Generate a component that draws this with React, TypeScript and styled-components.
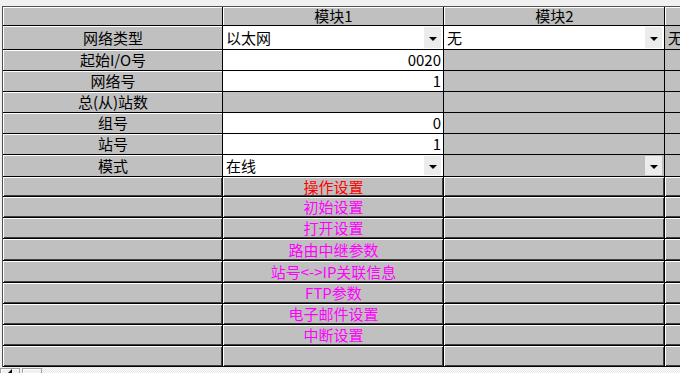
import React from 'react'
import styled, {createGlobalStyle, css} from 'styled-components'

const GlobalStyle = createGlobalStyle`
  html, body {
    margin: 0;
    padding: 0;
  }
  body {
    width: 680px;
    height: 373px;
    overflow: hidden;
    background: #f0f0f0;
    font-family: "Noto Sans CJK SC", "Liberation Sans", sans-serif;
    font-size: 15px;
    color: #000;
  }
`

const COLUMN_WIDTHS = [220, 221, 221, 221]
const ROW_HEIGHTS = [19, 24, 21, 21, 21, 21, 21, 22, 20, 21, 21, 22, 22, 21, 21, 21, 21]

type CellKind = 'header' | 'label' | 'input' | 'disabled' | 'action'

const Page = styled.div`
  display: flex;
  flex-direction: column;
  height: 373px;
  padding-top: 6px;
  box-sizing: border-box;
  overflow: hidden;
`

const Sheet = styled.div`
  display: grid;
  grid-template-columns: ${COLUMN_WIDTHS.map((w) => `${w}px`).join(' ')};
  grid-template-rows: ${ROW_HEIGHTS.map((h) => `${h}px`).join(' ')};
  width: max-content;
  margin-left: 2px;
  border-top: 1px solid #505050;
  border-left: 1px solid #505050;
`

const raised = css`
  background: #c0c0c0;
  box-shadow: inset 1px 1px 0 #ffffff;
`

const Cell = styled.div<{$kind: CellKind; $align?: 'left' | 'center' | 'right'; $color?: string}>`
  box-sizing: border-box;
  display: flex;
  align-items: center;
  justify-content: ${(p) =>
    p.$align === 'right' ? 'flex-end' : p.$align === 'left' ? 'flex-start' : 'center'};
  white-space: nowrap;
  line-height: 17px;
  border-right: 1px solid #000;
  border-bottom: 1px solid #000;
  padding: 0 2px 1px 3px;
  color: ${(p) => p.$color || '#000'};
  ${(p) => (p.$kind === 'header' || p.$kind === 'label') && raised}
  ${(p) => p.$kind === 'input' && 'background: #ffffff;'}
  ${(p) => p.$kind === 'disabled' && 'background: #c0c0c0;'}
  ${(p) =>
    p.$kind === 'action' &&
    css`
      background: #c0c0c0;
      box-shadow: inset 1px 1px 0 #ffffff, inset -1px -1px 0 #404040;
    `}
`

const Value = styled.span`
  flex: 1;
`

const DropButton = styled.span`
  align-self: stretch;
  width: 17px;
  margin: 1px 0 0 2px;
  background: #ececec;
  display: flex;
  align-items: center;
  justify-content: center;
  padding-top: 3px;
  box-sizing: border-box;
  &::after {
    content: '';
    border-left: 4px solid transparent;
    border-right: 4px solid transparent;
    border-top: 4px solid #000;
  }
`

const ScrollBar = styled.div`
  display: flex;
  height: 17px;
  margin-top: 1px;
  background: repeating-conic-gradient(#ffffff 0 25%, #e4e4e4 0 50%) 0 0 / 2px 2px;
`

const ScrollButton = styled.div<{$arrow?: boolean}>`
  width: 20px;
  box-sizing: border-box;
  background: #f0f0f0;
  border: 1px solid #a0a0a0;
  box-shadow: inset 1px 1px 0 #ffffff;
  display: flex;
  align-items: center;
  justify-content: center;
  margin-right: 2px;
  ${(p) =>
    p.$arrow &&
    css`
      &::after {
        content: '';
        border-top: 4px solid transparent;
        border-bottom: 4px solid transparent;
        border-right: 4px solid #000;
        margin-bottom: 4px;
      }
    `}
`

type Row = {label: string; cells: React.ReactNode[]}

const Select = ({value, kind = 'input'}: {value: string; kind?: CellKind}) => (
  <Cell $kind={kind} $align="left">
    <Value>{value}</Value>
    <DropButton />
  </Cell>
)

const Number = ({value}: {value: string}) => (
  <Cell $kind="input" $align="right">
    {value}
  </Cell>
)

const Blank = ({kind = 'disabled'}: {kind?: CellKind}) => <Cell $kind={kind} />

const actions = [
  {text: '操作设置', color: '#ff0000'},
  {text: '初始设置', color: '#ff00ff'},
  {text: '打开设置', color: '#ff00ff'},
  {text: '路由中继参数', color: '#ff00ff'},
  {text: '站号<->IP关联信息', color: '#ff00ff'},
  {text: 'FTP参数', color: '#ff00ff'},
  {text: '电子邮件设置', color: '#ff00ff'},
  {text: '中断设置', color: '#ff00ff'},
  {text: '', color: '#ff00ff'},
]

const rows: Row[] = [
  {
    label: '网络类型',
    cells: [
      <Select key="a" value="以太网" />,
      <Select key="b" value="无" />,
      <Cell key="c" $kind="disabled" $align="left">
        无
      </Cell>,
    ],
  },
  {label: '起始I/O号', cells: [<Number key="a" value="0020" />, <Blank key="b" />, <Blank key="c" />]},
  {label: '网络号', cells: [<Number key="a" value="1" />, <Blank key="b" />, <Blank key="c" />]},
  {label: '总(从)站数', cells: [<Blank key="a" />, <Blank key="b" />, <Blank key="c" />]},
  {label: '组号', cells: [<Number key="a" value="0" />, <Blank key="b" />, <Blank key="c" />]},
  {label: '站号', cells: [<Number key="a" value="1" />, <Blank key="b" />, <Blank key="c" />]},
  {
    label: '模式',
    cells: [
      <Select key="a" value="在线" />,
      <Select key="b" value="" kind="disabled" />,
      <Blank key="c" />,
    ],
  },
]

export default function App() {
  return (
    <Page>
      <GlobalStyle />
      <Sheet>
        <Cell $kind="header" />
        <Cell $kind="header">模块1</Cell>
        <Cell $kind="header">模块2</Cell>
        <Cell $kind="header" />
        {rows.map((row) => (
          <React.Fragment key={row.label}>
            <Cell $kind="label">{row.label}</Cell>
            {row.cells}
          </React.Fragment>
        ))}
        {actions.map((a, i) => (
          <React.Fragment key={i}>
            <Cell $kind="action" />
            <Cell $kind="action" $color={a.color}>
              {a.text}
            </Cell>
            <Cell $kind="action" />
            <Cell $kind="action" />
          </React.Fragment>
        ))}
      </Sheet>
      <ScrollBar>
        <ScrollButton $arrow />
        <ScrollButton />
      </ScrollBar>
    </Page>
  )
}
